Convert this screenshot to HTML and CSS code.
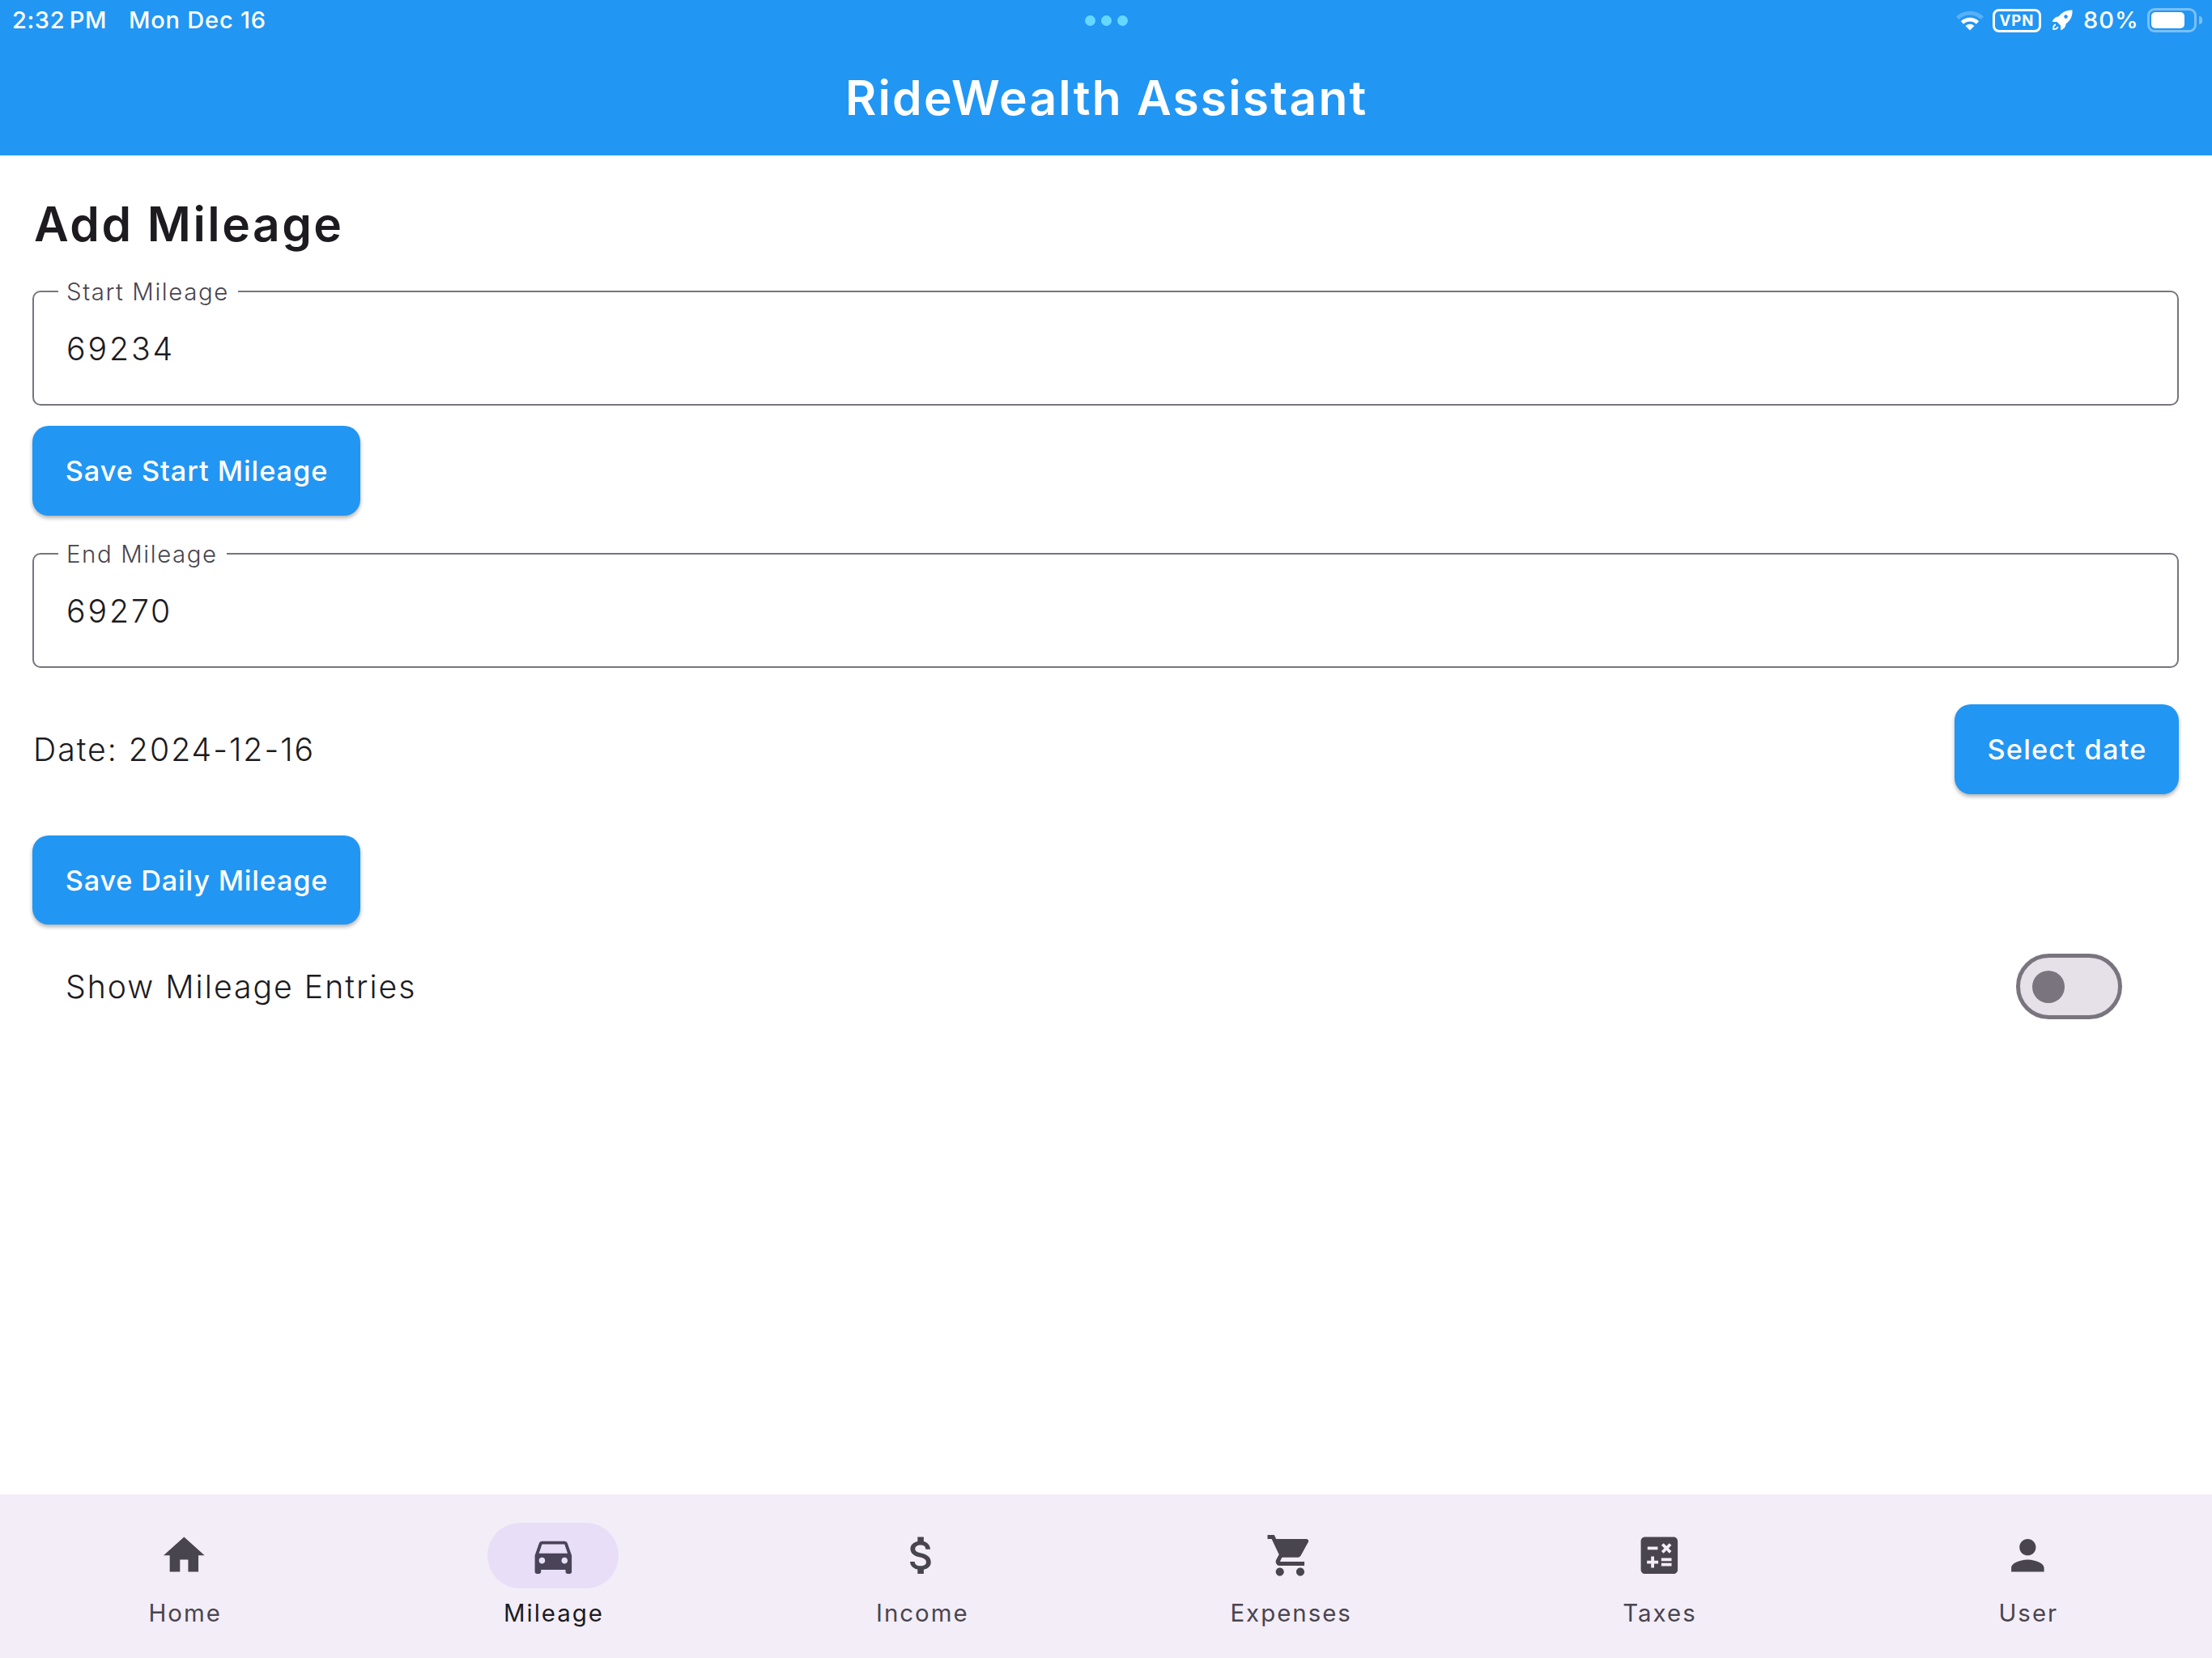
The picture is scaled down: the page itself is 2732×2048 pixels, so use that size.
FILE: index.html
```html
<!DOCTYPE html>
<html lang="en">
<head>
    <meta charset="UTF-8">
    <meta name="viewport" content="width=device-width, initial-scale=1.0">
    <title>RideWealth Assistant</title>
    <link rel="stylesheet" href="styles.css">
</head>
<body>
    <header>
        <div class="status">
            <div class="status-left">
                <span class="time">2:32&#8201;PM</span>
                <span class="day">Mon Dec 16</span>
            </div>
            <div class="dots"><i></i><i></i><i></i></div>
            <div class="status-right">
                <svg class="wifi" viewBox="0 0 36 28">
                    <path d="M1 9.5A24.5 24.5 0 0 1 35 9.5L31.6 13A19.5 19.5 0 0 0 4.4 13Z" fill="#fff" opacity=".25"/>
                    <path d="M6.8 15.3A16 16 0 0 1 29.2 15.3L25.8 18.7A11.2 11.2 0 0 0 10.2 18.7Z" fill="#fff"/>
                    <path d="M12.5 21A8 8 0 0 1 23.5 21L18 26.5Z" fill="#fff"/>
                </svg>
                <span class="vpn">VPN</span>
                <svg class="rocket" viewBox="0 0 26 26">
                    <path d="M25.5.5C17 0 12 4 8.5 8.5C5 8.5 2 11 .5 15L6.5 15L11 19.5L11.2 25.5C15 24 17.5 21 17.5 17.5C22 14 26 9 25.5.5ZM17.5 6.3A2.3 2.3 0 1 1 17.5 10.9A2.3 2.3 0 1 1 17.5 6.3Z" fill="#fff" fill-rule="evenodd"/>
                    <path d="M5 18.5C2.5 19 2 21.5 2.2 24C4.8 24 7.2 23.5 7.7 21" fill="none" stroke="#fff" stroke-width="1.8"/>
                </svg>
                <span class="percent">80%</span>
                <div class="battery"><div class="level"></div></div>
                <div class="tip"></div>
            </div>
        </div>
        <h1>RideWealth Assistant</h1>
    </header>

    <main>
        <h2>Add Mileage</h2>
        <fieldset class="field">
            <legend>Start Mileage</legend>
            <div class="value">69234</div>
        </fieldset>
        <button class="btn" id="saveStart">Save Start Mileage</button>
        <fieldset class="field end">
            <legend>End Mileage</legend>
            <div class="value">69270</div>
        </fieldset>
        <div class="row date">
            <span class="text">Date: 2024-12-16</span>
            <button class="btn select">Select date</button>
        </div>
        <button class="btn" id="saveDaily">Save Daily Mileage</button>
        <div class="row entries">
            <span class="text">Show Mileage Entries</span>
            <div class="switch"><div class="thumb"></div></div>
        </div>
    </main>

    <nav>
        <div class="item">
            <div class="icon"><svg viewBox="0 0 24 24"><path d="M10 20v-6h4v6h5v-8h3L12 3 2 12h3v8z"/></svg></div>
            <span>Home</span>
        </div>
        <div class="item active">
            <div class="icon"><svg viewBox="0 0 24 24"><path d="M18.92 6.01C18.72 5.42 18.16 5 17.5 5h-11c-.66 0-1.21.42-1.42 1.01L3 12v8c0 .55.45 1 1 1h1c.55 0 1-.45 1-1v-1h12v1c0 .55.45 1 1 1h1c.55 0 1-.45 1-1v-8l-2.08-5.99zM6.5 16c-.83 0-1.5-.67-1.5-1.5S5.67 13 6.5 13s1.5.67 1.5 1.5S7.33 16 6.5 16zm11 0c-.83 0-1.5-.67-1.5-1.5s.67-1.5 1.5-1.5 1.5.67 1.5 1.5-.67 1.5-1.5 1.5zM5 11l1.5-4.5h11L19 11H5z"/></svg></div>
            <span>Mileage</span>
        </div>
        <div class="item">
            <div class="icon"><svg viewBox="0 0 24 24"><path d="M11.8 10.9c-2.27-.59-3-1.2-3-2.15 0-1.09 1.01-1.85 2.7-1.85 1.78 0 2.44.85 2.5 2.1h2.21c-.07-1.72-1.12-3.3-3.21-3.81V3h-3v2.16c-1.94.42-3.5 1.68-3.5 3.61 0 2.31 1.91 3.46 4.7 4.13 2.5.6 3 1.48 3 2.41 0 .69-.49 1.79-2.7 1.79-2.06 0-2.87-.92-2.98-2.1h-2.2c.12 2.19 1.76 3.42 3.68 3.83V21h3v-2.15c1.95-.37 3.5-1.5 3.5-3.55 0-2.84-2.43-3.81-4.7-4.4z"/></svg></div>
            <span>Income</span>
        </div>
        <div class="item">
            <div class="icon"><svg viewBox="0 0 24 24"><path d="M7 18c-1.1 0-1.99.9-1.99 2S5.9 22 7 22s2-.9 2-2-.9-2-2-2zM1 2v2h2l3.6 7.59-1.35 2.45c-.16.28-.25.61-.25.96 0 1.1.9 2 2 2h12v-2H7.42c-.14 0-.25-.11-.25-.25l.03-.12.9-1.63h7.45c.75 0 1.41-.41 1.75-1.03l3.58-6.49c.08-.14.12-.31.12-.48 0-.55-.45-1-1-1H5.21l-.94-2H1zm16 16c-1.1 0-1.99.9-1.99 2s.89 2 1.99 2 2-.9 2-2-.9-2-2-2z"/></svg></div>
            <span>Expenses</span>
        </div>
        <div class="item">
            <div class="icon"><svg viewBox="0 0 24 24"><path d="M19 3H5c-1.1 0-2 .9-2 2v14c0 1.1.9 2 2 2h14c1.1 0 2-.9 2-2V5c0-1.1-.9-2-2-2zm-5.97 4.06L14.09 6l1.41 1.41L16.91 6l1.06 1.06-1.41 1.41 1.41 1.41-1.06 1.06-1.41-1.4-1.41 1.41-1.06-1.06 1.41-1.41-1.41-1.42zm-6.78.66h5v1.5h-5v-1.5zM11.5 16h-2v2H8v-2H6v-1.5h2v-2h1.5v2h2V16zm6.5 1.25h-5v-1.5h5v1.5zm0-2.5h-5v-1.5h5v1.5z"/></svg></div>
            <span>Taxes</span>
        </div>
        <div class="item">
            <div class="icon"><svg viewBox="0 0 24 24"><path d="M12 12c2.21 0 4-1.79 4-4s-1.79-4-4-4-4 1.79-4 4 1.79 4 4 4zm0 2c-2.67 0-8 1.34-8 4v2h16v-2c0-2.66-5.33-4-8-4z"/></svg></div>
            <span>User</span>
        </div>
    </nav>
</body>
</html>
```
FILE: styles.css
```css
body{
    margin: 0;
    width: 2732px;
    height: 2048px;
    display: flex;
    flex-direction: column;
    background-color: #ffffff;
    color: #1d1b20;
    font-family: Inter, "Liberation Sans", sans-serif;
}
header{
    height: 192px;
    flex: none;
    background-color: #2296f3;
    color: #ffffff;
}
.status{
    height: 50px;
    display: grid;
    grid-template-columns: 1fr auto 1fr;
    align-items: center;
    font-size: 29px;
    line-height: 34px;
    font-weight: 500;
}
.status-left{
    display: flex;
    gap: 27px;
    padding: 0 0 1px 15px;
}
.time{
    letter-spacing: 0.6px;
}
.day{
    letter-spacing: 0.8px;
}
.dots{
    display: flex;
    gap: 7px;
}
.dots i{
    width: 13px;
    height: 13px;
    border-radius: 50%;
    background-color: #64d8ff;
}
.status-right{
    display: flex;
    align-items: center;
    justify-content: flex-end;
    padding-right: 12px;
}
.wifi{
    width: 36px;
    height: 28px;
    margin-right: 10px;
}
.vpn{
    width: 60px;
    height: 29px;
    box-sizing: border-box;
    border: 3px solid #ffffff;
    border-radius: 8px;
    font-size: 18.5px;
    line-height: 23px;
    font-weight: 700;
    letter-spacing: 1px;
    text-align: center;
}
.rocket{
    width: 26px;
    height: 26px;
    margin: 0 13px;
}
.percent{
    padding-bottom: 1px;
    letter-spacing: 1.1px;
}
.battery{
    width: 61px;
    height: 30px;
    box-sizing: border-box;
    margin-left: 10px;
    padding: 2px;
    border: 3px solid rgba(255,255,255,0.4);
    border-radius: 9px;
}
.level{
    width: 41px;
    height: 20px;
    border-radius: 5px;
    background-color: #ffffff;
}
.tip{
    width: 4px;
    height: 10px;
    margin-left: 3px;
    border-radius: 0 5px 5px 0;
    background-color: rgba(255,255,255,0.4);
}
h1{
    margin: 0;
    padding: 34px 0 0 1.5px;
    font-size: 58.7px;
    line-height: 73px;
    font-weight: 600;
    letter-spacing: 2.2px;
    text-align: center;
}
main{
    flex: 1;
    padding: 50px 41px 0 40px;
}
h2{
    margin: 0 0 0 2px;
    font-size: 58.7px;
    line-height: 69px;
    font-weight: 600;
    letter-spacing: 2.5px;
}
.field{
    height: 160px;
    box-sizing: border-box;
    margin: 29.5px 0 0;
    padding: 0 40px;
    border: 2.5px solid #79747e;
    border-radius: 10px;
    min-width: 0;
}
.field.end{
    margin-top: 28.3px;
}
legend{
    margin-left: -10px;
    padding: 2px 11px 0 10px;
    color: #49454f;
    font-size: 29.4px;
    line-height: 36px;
    font-weight: 300;
    letter-spacing: 1.6px;
}
.value{
    padding-top: 28px;
    font-size: 39.2px;
    line-height: 48px;
    font-weight: 300;
    letter-spacing: 2.9px;
}
.btn{
    display: block;
    width: 405px;
    height: 110.7px;
    margin-top: 25.5px;
    padding: 0 0 0 1px;
    border: none;
    border-radius: 20px;
    background-color: #2296f3;
    box-shadow: 0 3px 5px rgba(0,0,0,0.3);
    color: #ffffff;
    font-family: inherit;
    font-size: 34.3px;
    font-weight: 500;
    letter-spacing: 0.95px;
}
.row{
    display: flex;
    justify-content: space-between;
    align-items: center;
}
.date{
    margin-top: 45px;
}
.select{
    width: 277px;
    margin-top: 0;
    letter-spacing: 1.2px;
}
.text{
    padding-left: 1px;
    font-size: 39.2px;
    font-weight: 300;
    letter-spacing: 2px;
}
#saveDaily{
    margin-top: 51px;
    letter-spacing: 0.8px;
}
.entries{
    margin-top: 36px;
    padding: 0 70.5px 0 40px;
}
.switch{
    width: 131px;
    height: 81px;
    box-sizing: border-box;
    display: flex;
    align-items: center;
    padding-left: 15px;
    border: 5px solid #79747e;
    border-radius: 41px;
    background-color: #e6e0e9;
}
.thumb{
    width: 40.5px;
    height: 40.5px;
    border-radius: 50%;
    background-color: #79747e;
}
nav{
    height: 202px;
    flex: none;
    display: flex;
    background-color: #f3edf7;
    color: #49454f;
}
.item{
    flex: 1;
    display: flex;
    flex-direction: column;
    align-items: center;
    padding-top: 35px;
    font-size: 29.4px;
    line-height: 36px;
    font-weight: 400;
    letter-spacing: 2px;
}
.item span{
    margin-top: 12.5px;
    padding-left: 2px;
}
.icon{
    width: 162px;
    height: 81px;
    display: flex;
    align-items: center;
    justify-content: center;
    border-radius: 41px;
}
.icon svg{
    width: 60.7px;
    height: 60.7px;
    fill: #49454f;
}
.active{
    color: #1d1b20;
}
.active .icon{
    background-color: #e8def8;
}
.active .icon svg{
    fill: #4a4458;
}
```
